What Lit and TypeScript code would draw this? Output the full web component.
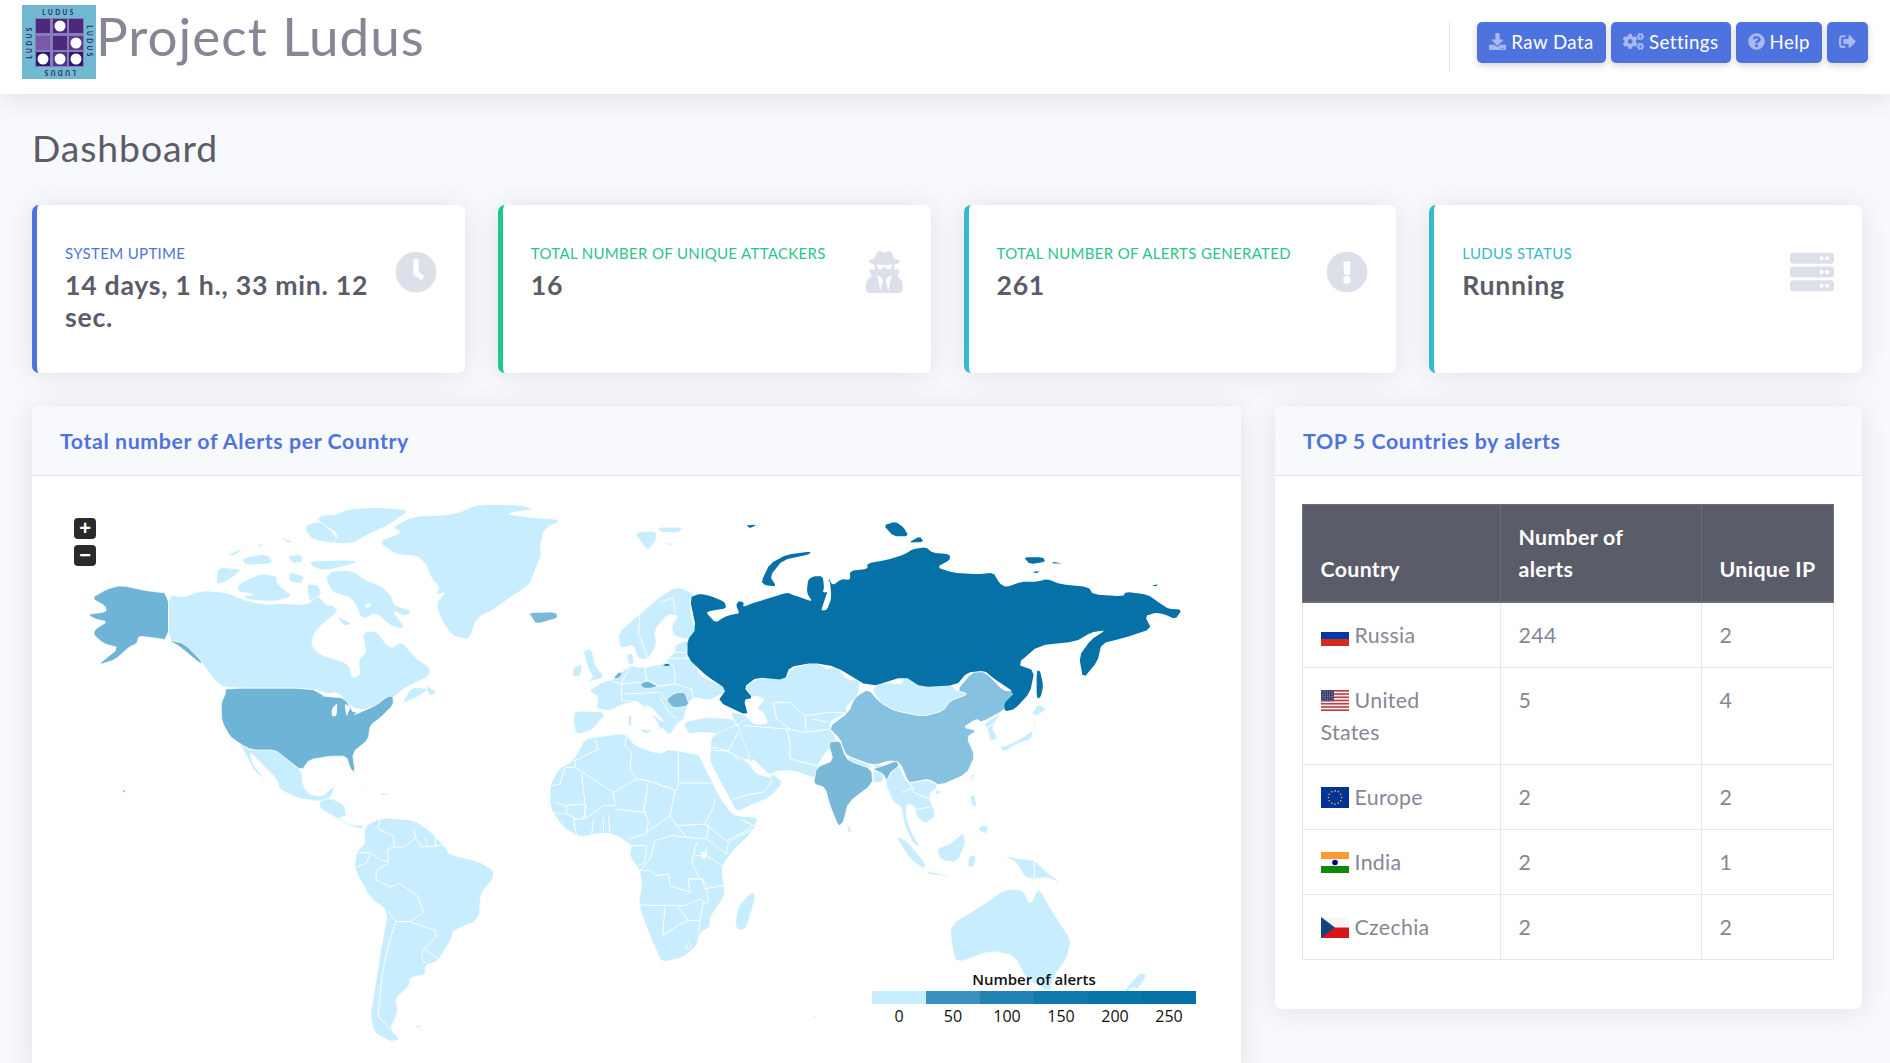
import {LitElement, html, css, svg} from 'lit';
import {customElement} from 'lit/decorators.js';

const FONT = css`Lato, "Noto Sans", sans-serif`;

// icon paths, [viewBox, d]
const ICONS: Record<string, [string, string]> = {
  download: ['0 0 512 512', 'M216 0h80c13.3 0 24 10.7 24 24v168h87.7c17.8 0 26.7 21.5 14.1 34.1L269.7 378.3c-7.5 7.5-19.8 7.5-27.3 0L90.1 226.1c-12.6-12.6-3.7-34.1 14.1-34.1H192V24c0-13.3 10.7-24 24-24zm296 376v112c0 13.3-10.7 24-24 24H24c-13.3 0-24-10.7-24-24V376c0-13.3 10.7-24 24-24h146.7l49 49c20.1 20.1 52.5 20.1 72.6 0l49-49H488c13.3 0 24 10.7 24 24zm-124 88c0-11-9-20-20-20s-20 9-20 20 9 20 20 20 20-9 20-20zm64 0c0-11-9-20-20-20s-20 9-20 20 9 20 20 20 20-9 20-20z'],
  cogs: ['0 0 640 512', 'M512.1 191l-8.2 14.3c-3 5.3-9.4 7.5-15.1 5.4-11.8-4.4-22.6-10.7-32.1-18.6-4.6-3.8-5.8-10.5-2.8-15.7l8.2-14.3c-6.9-8-12.3-17.3-15.9-27.4h-16.5c-6 0-11.2-4.3-12.2-10.3-2-12-2.1-24.6 0-37.1 1-6 6.2-10.4 12.2-10.4h16.5c3.6-10.1 9-19.4 15.9-27.4l-8.2-14.3c-3-5.2-1.9-11.9 2.8-15.7 9.5-7.9 20.4-14.2 32.1-18.6 5.7-2.1 12.1.1 15.1 5.4l8.2 14.3c10.5-1.9 21.2-1.9 31.7 0L552 6.3c3-5.3 9.4-7.5 15.1-5.4 11.8 4.4 22.6 10.7 32.1 18.6 4.6 3.8 5.8 10.5 2.8 15.7l-8.2 14.3c6.9 8 12.3 17.3 15.9 27.4h16.5c6 0 11.2 4.3 12.2 10.3 2 12 2.1 24.6 0 37.1-1 6-6.2 10.4-12.2 10.4h-16.5c-3.6 10.1-9 19.4-15.9 27.4l8.2 14.3c3 5.2 1.9 11.9-2.8 15.7-9.5 7.9-20.4 14.2-32.1 18.6-5.7 2.1-12.1-.1-15.1-5.4l-8.2-14.3c-10.4 1.9-21.2 1.9-31.7 0zm-10.5-58.8c38.5 29.6 82.4-14.3 52.8-52.8-38.5-29.7-82.4 14.3-52.8 52.8zM386.3 286.1l33.7 16.8c10.1 5.8 14.5 18.1 10.5 29.1-8.9 24.2-26.4 46.4-42.6 65.8-7.4 8.9-20.2 11.1-30.3 5.3l-29.1-16.8c-16 13.7-34.6 24.6-54.9 31.7v33.6c0 11.6-8.3 21.6-19.7 23.6-24.6 4.2-50.4 4.4-75.9 0-11.5-2-20-11.9-20-23.6V418c-20.3-7.2-38.9-18-54.9-31.7L74 403c-10 5.8-22.9 3.6-30.3-5.3-16.2-19.4-33.3-41.6-42.2-65.7-4-10.9.4-23.2 10.5-29.1l33.3-16.8c-3.9-20.9-3.9-42.4 0-63.4L12 205.8c-10.1-5.8-14.6-18.1-10.5-29 8.9-24.2 26-46.4 42.2-65.8 7.4-8.9 20.2-11.1 30.3-5.3l29.1 16.8c16-13.7 34.6-24.6 54.9-31.7V57.1c0-11.5 8.2-21.5 19.6-23.5 24.6-4.2 50.5-4.4 76-.1 11.5 2 20 11.9 20 23.6v33.6c20.3 7.2 38.9 18 54.9 31.7l29.1-16.8c10-5.8 22.9-3.6 30.3 5.3 16.2 19.4 33.2 41.6 42.1 65.8 4 10.9.1 23.2-10 29.1l-33.7 16.8c3.9 21 3.9 42.5 0 63.5zm-117.6 21.1c59.2-77-28.7-164.9-105.7-105.7-59.2 77 28.7 164.9 105.7 105.7zm243.4 182.7l-8.2 14.3c-3 5.3-9.4 7.5-15.1 5.4-11.8-4.4-22.6-10.7-32.1-18.6-4.6-3.8-5.8-10.5-2.8-15.7l8.2-14.3c-6.9-8-12.3-17.3-15.9-27.4h-16.5c-6 0-11.2-4.3-12.2-10.3-2-12-2.1-24.6 0-37.1 1-6 6.2-10.4 12.2-10.4h16.5c3.6-10.1 9-19.4 15.9-27.4l-8.2-14.3c-3-5.2-1.9-11.9 2.8-15.7 9.5-7.9 20.4-14.2 32.1-18.6 5.7-2.1 12.1.1 15.1 5.4l8.2 14.3c10.5-1.9 21.2-1.9 31.7 0l8.2-14.3c3-5.3 9.4-7.5 15.1-5.4 11.8 4.4 22.6 10.7 32.1 18.6 4.6 3.8 5.8 10.5 2.8 15.7l-8.2 14.3c6.9 8 12.3 17.3 15.9 27.4h16.5c6 0 11.2 4.3 12.2 10.3 2 12 2.1 24.6 0 37.1-1 6-6.2 10.4-12.2 10.4h-16.5c-3.6 10.1-9 19.4-15.9 27.4l8.2 14.3c3 5.2 1.9 11.9-2.8 15.7-9.5 7.9-20.4 14.2-32.1 18.6-5.7 2.1-12.1-.1-15.1-5.4l-8.2-14.3c-10.4 1.9-21.2 1.9-31.7 0zM501.6 431c38.5 29.6 82.4-14.3 52.8-52.8-38.5-29.6-82.4 14.3-52.8 52.8z'],
  help: ['0 0 512 512', 'M504 256c0 136.997-111.043 248-248 248S8 392.997 8 256C8 119.083 119.043 8 256 8s248 111.083 248 248zM262.655 90c-54.497 0-89.255 22.957-116.549 63.758-3.536 5.286-2.353 12.415 2.715 16.258l34.699 26.31c5.205 3.947 12.621 3.008 16.665-2.122 17.864-22.658 30.113-35.797 57.303-35.797 20.429 0 45.698 13.148 45.698 32.958 0 14.976-12.363 22.667-32.534 33.976C247.128 238.528 216 254.941 216 296v4c0 6.627 5.373 12 12 12h56c6.627 0 12-5.373 12-12v-1.333c0-28.462 83.186-29.647 83.186-106.667 0-58.002-60.165-102-116.531-102zM256 338c-25.365 0-46 20.635-46 46 0 25.364 20.635 46 46 46s46-20.636 46-46c0-25.365-20.635-46-46-46z'],
  signout: ['0 0 512 512', 'M497 273L329 441c-15 15-41 4.5-41-17v-96H152c-13.3 0-24-10.7-24-24v-96c0-13.3 10.7-24 24-24h136V88c0-21.4 25.9-32 41-17l168 168c9.3 9.4 9.3 24.6 0 34zM192 436v-40c0-6.6-5.4-12-12-12H96c-17.7 0-32-14.3-32-32V160c0-17.7 14.3-32 32-32h84c6.6 0 12-5.4 12-12V76c0-6.6-5.4-12-12-12H96c-53 0-96 43-96 96v192c0 53 43 96 96 96h84c6.6 0 12-5.4 12-12z'],
  clock: ['0 0 512 512', 'M256,8C119,8,8,119,8,256S119,504,256,504,504,393,504,256,393,8,256,8Zm92.49,313h0l-20,25a16,16,0,0,1-22.49,2.5h0l-67-49.72a40,40,0,0,1-15-31.23V112a16,16,0,0,1,16-16h32a16,16,0,0,1,16,16V256l58,42.5A16,16,0,0,1,348.49,321Z'],
  secret: ['0 0 448 512', 'M383.9 308.3l23.9-62.6c4-10.5-3.7-21.7-15-21.7h-58.5c11-18.9 17.8-40.6 17.8-64v-.3c39.2-7.8 64-19.1 64-31.7 0-13.3-27.3-25.1-70.1-33-9.2-32.8-27-65.8-40.6-82.8-9.5-11.9-25.9-15.6-39.5-8.8l-27.6 13.8c-9 4.5-19.6 4.5-28.6 0L182.1 3.4c-13.6-6.8-30-3.1-39.5 8.8-13.5 17-31.4 50-40.6 82.8-42.7 7.9-70 19.7-70 33 0 12.6 24.8 23.9 64 31.7v.3c0 23.4 6.8 45.1 17.8 64H56.3c-11.5 0-19.2 11.7-14.7 22.3l25.8 60.2C27.3 329.8 0 372.7 0 422.4v44.8C0 491.9 20.1 512 44.8 512h358.4c24.7 0 44.8-20.1 44.8-44.8v-44.8c0-48.4-25.8-90.4-64.1-114.1zM176 480l-41.6-192 49.6 32 24 40-32 120zm96 0l-32-120 24-40 49.6-32L272 480zm41.7-298.5c-3.9 11.9-7 24.6-16.5 33.4-10.1 9.3-48 22.4-64-25-2.8-8.4-15.4-8.4-18.3 0-17 50.2-56 32.4-64 25-9.5-8.8-12.7-21.5-16.5-33.4-.8-2.5-6.3-5.7-6.3-5.8v-10.8c28.3 3.6 61 5.8 96 5.8s67.7-2.1 96-5.8v10.8c-.1.1-5.6 3.2-6.4 5.8z'],
  alert: ['0 0 512 512', 'M504 256c0 136.997-111.043 248-248 248S8 392.997 8 256C8 119.083 119.043 8 256 8s248 111.083 248 248zm-248 50c-25.405 0-46 20.595-46 46s20.595 46 46 46 46-20.595 46-46-20.595-46-46-46zm-43.673-165.346l7.418 136c.347 6.364 5.609 11.346 11.982 11.346h48.546c6.373 0 11.635-4.982 11.982-11.346l7.418-136c.375-6.874-5.098-12.654-11.982-12.654h-63.383c-6.884 0-12.356 5.78-11.981 12.654z'],
  server: ['0 0 512 448', 'M480 128H32c-17.7 0-32-14.300-32-32V32C0 14.300 14.300 0 32 0h448c17.700 0 32 14.300 32 32v64c0 17.700-14.300 32-32 32zm-48-88a24 24 0 1 0 0 48 24 24 0 0 0 0-48zm-64 0a24 24 0 1 0 0 48 24 24 0 0 0 0-48zM480 288H32c-17.700 0-32-14.300-32-32v-64c0-17.700 14.300-32 32-32h448c17.700 0 32 14.300 32 32v64c0 17.700-14.300 32-32 32zm-48-88a24 24 0 1 0 0 48 24 24 0 0 0 0-48zm-64 0a24 24 0 1 0 0 48 24 24 0 0 0 0-48zM480 448H32c-17.700 0-32-14.300-32-32v-64c0-17.700 14.300-32 32-32h448c17.700 0 32 14.300 32 32v64c0 17.700-14.300 32-32 32zm-48-88a24 24 0 1 0 0 48 24 24 0 0 0 0-48zm-64 0a24 24 0 1 0 0 48 24 24 0 0 0 0-48z'],
};

const icon = (name: string, cls: string) => html`<svg class=${cls} viewBox=${ICONS[name][0]} aria-hidden="true"><path fill-rule="evenodd" d=${ICONS[name][1]}></path></svg>`;

const BUTTONS = [
  {icon: 'download', label: 'Raw Data'},
  {icon: 'cogs', label: 'Settings'},
  {icon: 'help', label: 'Help'},
  {icon: 'signout', label: ''},
];

const STATS = [
  {label: 'System uptime', value: '14 days, 1 h., 33 min. 12 sec.', icon: 'clock', tone: 'primary'},
  {label: 'Total number of unique attackers', value: '16', icon: 'secret', tone: 'success'},
  {label: 'Total number of alerts generated', value: '261', icon: 'alert', tone: 'success', edge: 'info'},
  {label: 'Ludus status', value: 'Running', icon: 'server', tone: 'info'},
];

const COUNTRIES = [
  {flag: 'ru', name: 'Russia', alerts: 244, ips: 2},
  {flag: 'us', name: 'United States', alerts: 5, ips: 4},
  {flag: 'eu', name: 'Europe', alerts: 2, ips: 2},
  {flag: 'in', name: 'India', alerts: 2, ips: 1},
  {flag: 'cz', name: 'Czechia', alerts: 2, ips: 2},
];

function euStars() {
  const stars = [];
  for (let i = 0; i < 12; i++) {
    const a = (i * Math.PI) / 6;
    stars.push(svg`<circle cx=${14 + 6.6 * Math.cos(a)} cy=${10.5 + 6.6 * Math.sin(a)} r="0.8" fill="#fc0"></circle>`);
  }
  return stars;
}

function usStripes() {
  const out = [];
  for (let i = 0; i < 7; i++) out.push(svg`<rect y=${i * 3.23} width="28" height="1.62" fill="#bd3d44"></rect>`);
  return out;
}

function usStars() {
  const out = [];
  for (let r = 0; r < 6; r++) {
    for (let c = 0; c < 7; c++) out.push(svg`<circle cx=${1 + c * 1.85} cy=${1 + r * 1.85} r="0.45" fill="#c8cbe0"></circle>`);
  }
  return out;
}

const FLAGS: Record<string, unknown> = {
  ru: svg`<rect width="28" height="7" fill="#fff"></rect><rect y="7" width="28" height="7" fill="#0039a6"></rect><rect y="14" width="28" height="7" fill="#d52b1e"></rect>`,
  us: svg`<rect width="28" height="21" fill="#f4f4f4"></rect>${usStripes()}<rect width="13" height="11.300" fill="#3b3b6d"></rect>${usStars()}`,
  eu: svg`<rect width="28" height="21" fill="#039"></rect>${euStars()}`,
  in: svg`<rect width="28" height="7" fill="#f93"></rect><rect y="7" width="28" height="7" fill="#fff"></rect><rect y="14" width="28" height="7" fill="#128807"></rect><circle cx="14" cy="10.500" r="2.800" fill="#008"></circle>`,
  cz: svg`<rect width="28" height="10.500" fill="#f6f6f6"></rect><rect y="10.500" width="28" height="10.500" fill="#d7141a"></rect><path d="M0 0l14 10.500L0 21z" fill="#11457e"></path>`,
};

// Map shapes are traced per crop, each group has its own scale onto the page
const Z_AMERICAS = 'translate(40 490) scale(.3954 .3635)';
const Z_EURASIA = 'translate(540 490) scale(.4337 .3635)';
const Z_EUROPE = 'translate(560 570) scale(.3333)';
const Z_AFRICA = 'translate(540 720) scale(.3333)';
const Z_ASIA = 'translate(800 660) scale(.3333)';

// cuts each corner a little so traced coastlines don't look like polygons
function soften(p: string) {
  const n = p.trim().split(/\s+/).map(Number);
  const pts: number[][] = [];
  for (let i = 0; i < n.length; i += 2) pts.push([n[i], n[i + 1]]);
  const out: string[] = [];
  pts.forEach((a, i) => {
    const b = pts[(i + 1) % pts.length];
    out.push(`${a[0] + (b[0] - a[0]) * 0.18} ${a[1] + (b[1] - a[1]) * 0.18}`);
    out.push(`${a[0] + (b[0] - a[0]) * 0.82} ${a[1] + (b[1] - a[1]) * 0.82}`);
  });
  return 'M' + out.join(' ') + 'Z';
}

const poly = (cls: string, pts: string[]) => pts.map(p => svg`<path class=${cls} d=${soften(p)}></path>`);
const lines = (pts: string[]) => pts.map(p => svg`<path class="border" d=${'M' + p}></path>`);

const americas = svg`<g transform=${Z_AMERICAS}>
  ${poly('c0', [
    '855 145 915 120 890 105 945 75 1025 72 1060 65 1100 45 1140 42 1210 44 1255 55 1175 68 1240 78 1322 85 1275 110 1265 160 1268 185 1255 215 1240 260 1215 280 1180 305 1150 330 1105 355 1085 415 1045 405 1020 370 1005 330 1005 310 1025 285 1000 290 1010 270 990 245 975 205 955 185 900 180',
    '325 290 360 298 395 285 420 280 470 285 530 310 575 318 600 315 680 318 700 290 725 320 740 320 755 335 700 385 685 425 705 455 780 480 790 520 810 510 805 470 825 450 815 395 850 390 885 440 915 420 950 465 985 490 985 515 925 545 895 572 850 600 805 610 750 570 685 548 468 548 440 525 410 478 360 425 325 415',
    '712 72 750 70 780 55 850 50 935 58 900 85 880 100 830 125 790 150 740 150 755 125 700 85',
    '722 245 740 225 790 225 830 255 860 265 890 295 895 320 940 335 925 350 890 335 920 375 915 385 885 375 850 340 815 360 790 300 740 285',
    '450 215 510 220 490 240 470 255 445 262',
    '500 262 560 232 600 240 600 262 640 295 590 310 530 305 510 295 545 290 500 282',
    '470 182 515 162 495 182',
    '510 190 575 178 590 205 520 210',
    '548 155 565 150 560 160',
    '625 185 660 180 665 200 640 205',
    '680 198 790 195 800 205 720 225 690 215',
    '672 100 710 88 750 130 745 150 690 140 672 115',
    '605 130 640 145 630 150',
    '628 228 670 240 660 260 632 255',
    '675 260 705 265 712 290 680 310',
    '750 350 790 370 770 378',
    '975 540 1005 560 985 570',
    '940 545 985 550 950 575 915 590',
    '505 700 535 718 595 718 620 740 662 775 665 815 680 840 715 845 740 820 745 820 735 850 705 860 650 850 605 825 600 800 560 755 530 722 540 760 570 800 545 780 515 720',
    '705 860 735 850 770 870 775 900 755 905 790 925 820 925 815 935 790 930 750 905 710 880',
    '770 800 840 830 810 815',
    '860 835 890 840 865 843',
    '820 930 860 905 945 910 985 940 1025 985 1035 1005 1110 1025 1148 1050 1145 1075 1115 1110 1110 1185 1045 1215 1040 1240 1005 1300 975 1310 975 1335 935 1345 935 1365 900 1400 905 1440 885 1485 912 1515 885 1520 845 1495 835 1450 845 1385 860 1280 880 1160 835 1125 795 1045 800 1000 822 975',
    '948 1478 968 1475 958 1484',
  ])}
  ${poly('us', [
    '325 287 270 280 205 265 170 275 130 300 165 322 168 338 120 345 140 358 170 365 140 385 135 400 160 425 200 437 145 485 190 470 225 435 245 425 250 405 275 408 325 415',
    '325 415 365 425 410 475 405 480 355 435',
    '468 548 685 548 720 570 770 575 795 620 850 595 880 570 893 570 893 595 860 630 835 650 830 690 790 725 797 780 785 770 775 735 735 735 680 745 662 775 620 740 595 718 535 718 505 700 480 680 460 640 458 590 470 560',
    '210 828 216 828 216 834 210 834',
  ])}
  ${poly('in', ['1235 340 1305 338 1310 355 1255 372 1245 355'])}
  ${poly('sea', [
    '738 605 752 588 750 625 738 625',
    '770 590 785 600 775 628',
    '708 570 750 558 770 575 730 572',
    '805 612 845 595 825 608 790 625',
    '822 318 838 312 835 325 825 328',
  ])}
  ${lines([
    '860 905 855 935 895 955 895 985 880 990 880 1030 850 1050 850 1075 885 1095 910 1085 955 1120 970 1165 935 1190 900 1190 880 1160',
    '935 1190 1000 1215 1000 1235 970 1265 965 1290 975 1305',
    '900 1190 880 1260 865 1340 855 1450 885 1485',
    '795 1000 835 1000 860 1020 880 1025',
    '895 985 920 985 950 960 945 935',
    '950 960 965 985 1020 980',
    '975 960 980 985',
    '1000 955 1000 985',
    '800 1040 825 1030 835 1005',
    '970 1265 1005 1290',
    '325 287 325 415',
  ])}
</g>`;

const eurasia = svg`<g transform=${Z_EURASIA}>
  ${poly('ru', [
    '345 298 370 288 395 295 425 310 430 328 395 335 383 340 405 368 425 352 445 345 460 342 452 320 458 308 470 312 468 325 495 312 530 300 570 285 585 292 605 300 628 310 615 285 618 250 630 240 652 240 655 270 652 285 668 282 665 245 675 265 695 248 715 250 715 225 755 220 755 205 800 195 840 180 860 165 890 160 905 175 945 180 945 195 915 215 950 230 1010 235 1045 230 1060 260 1075 270 1110 255 1145 255 1170 248 1200 262 1265 270 1275 290 1345 295 1350 283 1400 290 1430 315 1450 330 1480 332 1465 358 1440 345 1420 340 1395 350 1410 385 1345 410 1295 425 1285 475 1252 522 1243 460 1270 415 1305 388 1270 395 1235 420 1150 430 1100 482 1140 500 1130 560 1095 605 1072 612 1070 590 1095 560 1045 520 1025 500 985 505 960 540 880 545 840 515 760 545 680 488 630 478 575 490 565 525 500 518 470 545 490 575 470 580 480 625 410 585 430 550 385 515 340 465 340 415 360 385',
    '792 100 820 90 838 105 850 130 815 130',
    '850 148 875 130 885 145',
    '625 172 620 180 560 195 530 240 545 268 520 265 510 255 530 205 570 180',
    '1115 188 1160 188 1165 200 1130 207',
    '1180 200 1205 205 1185 205',
    '1410 265 1425 262 1420 268',
    '475 100 500 98 485 108',
    '1135 228 1152 226 1145 232',
  ])}
  ${poly('sea', ['648 335 662 332 672 300 668 245 662 285 655 310'])}
  ${poly('c0', [
    '218 120 265 115 270 135 250 170 235 150',
    '270 105 330 105 320 120 280 120',
    '290 148 308 150 298 156',
    '945 1200 1020 1145 1075 1100 1115 1105 1130 1145 1150 1095 1185 1170 1225 1240 1215 1290 1185 1340 1175 1385 1120 1345 1095 1285 1040 1270 960 1305 950 1260',
    '1385 1330 1400 1335 1380 1375 1365 1370 1340 1400 1360 1360',
    '630 1450 638 1450 634 1455',
  ])}
</g>`;

const europe = svg`<g transform=${Z_EUROPE}>
  ${poly('c0', [
    '405 75 350 52 290 90 240 135 175 190 180 238 220 228 235 270 265 270 290 225 282 185 325 135 355 140 335 170 340 200 385 212 410 180 395 150 390 85',
    '385 212 345 228 345 250 322 268 320 282 258 295 235 295 212 290 190 305 160 330 130 338 85 365 115 382 110 420 150 425 190 405 235 398 265 425 300 470 290 488 305 475 330 500 350 465 372 450 378 420 392 392 410 385 445 395 495 370 495 350 470 345 420 318 408 288 380 265',
    '200 255 218 255 222 285 205 285',
    '45 425 140 430 100 480 60 495 45 490 40 450',
    '70 245 95 240 105 290 135 325 80 340 100 325 85 300 75 265',
    '40 295 68 285 62 320 38 322',
    '370 460 435 445 525 450 530 480 490 495 425 490 385 495',
    '205 440 215 440 215 470 205 470',
    '240 480 280 485 255 495',
    '510 428 565 440 555 470 530 468',
    '555 350 600 325 680 330 690 300 765 280 800 300 830 293 860 330 900 335 895 378 860 410 860 432 805 460 830 510 810 540 800 545 770 595 780 625 755 625 700 605 650 605 630 620 580 570 570 580 540 520 530 470 565 445 580 465 625 465 610 430 590 420 615 390 585 380 555 395 570 375',
  ])}
  ${poly('sea', ['255 405 280 420 315 460 300 455 262 425'])}
  ${poly('us', ['160 328 175 310 188 310 180 325 170 330', '240 345 262 335 295 352 272 358 250 358'])}
  ${poly('in', ['318 392 345 372 375 370 388 410 340 418'])}
  ${poly('ru', ['308 290 330 290 330 285 318 285'])}
  ${lines([
    '255 295 258 330 295 352 345 345 345 320 340 290 320 282',
    '212 290 185 340 185 395 235 398',
    '185 345 150 335',
    '190 375 300 370 318 392',
    '345 345 395 360 400 390',
    '340 250 385 250',
    '322 268 385 268',
    '240 340 185 345',
    '290 90 240 135 235 190 265 270',
    '300 100 340 85 345 130',
    '640 400 690 400 735 440 810 430 860 432',
    '555 470 680 480 690 520 690 570 770 590',
    '680 480 735 490 810 480 830 510',
    '735 440 740 490',
    '640 400 650 450 690 480',
    '760 450 800 460',
    '300 385 330 435 350 450',
    '530 470 550 520',
  ])}
</g>`;

const africa = svg`<g transform=${Z_AFRICA}>
  ${poly('c0', [
    '135 60 165 55 255 42 285 80 360 105 385 90 480 108 480 115 540 235 580 290 655 295 640 335 570 405 545 445 550 490 555 530 510 595 510 625 480 640 470 680 430 715 365 730 350 695 325 640 295 555 305 500 300 455 268 410 275 380 240 355 200 340 115 355 65 320 30 265 30 200 55 150 100 125',
    '640 515 645 540 620 625 600 635 585 620 595 560',
    '515 50 595 15 600 40 630 115 620 125 545 90 520 85 510 100',
    '510 100 520 85 545 90 620 125 650 165 690 175 700 165 730 190 690 235 640 255 590 280 570 240 510 130',
  ])}
  ${poly('sea', ['484 400 498 398 498 418 484 420'])}
  ${lines([
    '105 145 220 220 290 180 325 185 410 215 415 195 415 100',
    '165 60 175 90 105 125 105 145',
    '260 50 255 80 275 100 270 150 290 180',
    '415 192 520 192',
    '125 165 135 255 75 260 45 250',
    '35 200 60 195 75 145 105 145',
    '220 220 225 260 190 260 135 300 135 255',
    '225 270 310 280 325 190',
    '310 265 325 310 318 345 265 360',
    '405 215 390 290 320 340',
    '390 290 410 320 495 315 520 265 525 240',
    '410 320 440 355 500 360 505 315',
    '440 355 395 350 345 365 330 420 300 455 335 455 345 470 385 465 390 500 450 520 445 480 490 480 490 500',
    '500 360 560 405 565 370 640 330',
    '495 315 560 365 610 340 640 320 600 300',
    '470 370 455 430 480 480 495 490 505 545 500 555 480 540 435 560 385 560 300 558',
    '500 380 500 410 545 440',
    '465 410 500 410',
    '550 500 490 510',
    '375 565 368 650 420 615 445 605 480 605 490 550',
    '415 565 445 605',
    '480 605 475 640',
    '140 260 130 300 100 300 110 350',
    '160 300 155 350',
    '190 295 190 340',
    '205 290 210 340',
    '80 260 80 285 110 300',
    '30 280 75 285',
    '270 380 320 380 315 430 295 440',
    '435 685 445 672 455 680 445 690 435 685',
    '520 95 565 95 600 125',
    '580 240 630 225 670 220 695 190 690 175',
    '545 90 565 95 595 40',
  ])}
</g>`;

const asia = svg`<g transform=${Z_ASIA}>
  ${poly('cn', ['205 90 240 130 285 155 370 172 430 155 450 125 505 105 470 95 515 40 555 38 610 95 645 95 630 125 610 155 545 190 530 180 490 205 530 215 500 235 525 290 500 345 420 380 385 360 340 370 325 370 300 310 270 305 220 320 140 290 130 270 120 240 85 205 145 160 165 115'])}
  ${poly('c0', [
    '215 90 250 70 305 75 310 55 370 72 450 75 470 95 505 105 450 125 430 155 370 172 285 155 240 130',
    '550 195 605 160 575 205 595 240 570 245 565 215',
    '705 180 705 210 660 240 620 260 600 262 610 280 650 255 695 240 700 210',
    '695 165 715 135 740 150 710 170',
    '140 292 215 320 215 330 145 310',
    '222 315 245 318 240 328 222 325',
    '218 335 250 345 248 370 220 372',
    '140 492 155 515 145 522',
    '295 315 320 370 340 370 385 362 415 380 385 410 408 470 375 495 348 470 345 445 322 432 318 470 335 520 360 565 340 555 312 495 305 445 280 430 255 370 272 345',
    '285 530 320 545 378 615 372 630 335 605',
    '380 635 460 655 420 650 385 645',
    '408 570 450 555 490 520 497 555 470 610 425 605',
    '505 590 530 590 520 625 505 625',
    '510 410 525 410 530 445 515 440',
    '540 500 565 500 560 525 535 515',
    '512 350 523 345 517 368',
    '405 395 420 392 418 405 408 405',
    '610 590 665 600 705 605 740 640 785 672 740 655 705 660 675 655 650 610',
  ])}
  ${poly('in', [
    '85 250 120 245 132 282 145 305 215 330 218 375 145 430 130 490 115 502 90 440 75 385 40 375 50 325 100 305',
    '218 330 250 320 290 305 298 320 272 340 260 365 250 345 222 332',
  ])}
  ${poly('ru', ['710 35 720 35 730 80 722 115 710 118'])}
  ${lines([
    '330 370 340 400 390 420',
    '305 400 345 385',
    '350 450 390 445',
    '703 605 703 660',
    '558 205 590 195',
  ])}
</g>`;

@customElement('world-map')
export class WorldMap extends LitElement {
  static styles = css`
    :host {
      display: block;
      position: relative;
      height: 600px;
    }

    svg {
      display: block;
      width: 100%;
      height: 100%;
    }

    path {
      stroke: #fff;
      stroke-width: 0.7;
      vector-effect: non-scaling-stroke;
      stroke-linejoin: round;
    }

    .c0 { fill: #c8edff; }
    .us { fill: #6db4d6; }
    .cn { fill: #86c1e0; }
    .in { fill: #7ab8d8; }
    .ru { fill: #0571a6; stroke: none; }
    .sea { fill: #fff; stroke: none; }
    .border { fill: none; stroke-width: 1; }

    .zoom {
      position: absolute;
      left: 42px;
      top: 42px;
      display: flex;
      flex-direction: column;
      gap: 6px;
    }

    .zoom span {
      width: 22px;
      height: 21px;
      border-radius: 4px;
      background: #2a2a2a;
      color: #fff;
      font: 700 20px/20px "Liberation Sans", sans-serif;
      text-align: center;
    }

    .legend {
      position: absolute;
      left: 840px;
      top: 495px;
      width: 324px;
      font: 16px/16px "Open Sans", sans-serif;
      color: #111;
      text-align: center;
    }

    .legend-title {
      margin-bottom: 4px;
      font-size: 15px;
      font-weight: 600;
    }

    .scale {
      display: grid;
      grid-template-columns: repeat(6, 54px);
    }

    .swatch {
      height: 13px;
    }

    .tick {
      margin-top: 4px;
    }
  `;

  render() {
    const steps = [
      ['0', '#c8edff'],
      ['50', '#3a91bf'],
      ['100', '#2183b3'],
      ['150', '#0e7aad'],
      ['200', '#0775aa'],
      ['250', '#0571a6'],
    ];
    return html`
      <svg viewBox="32 477 1209 600" aria-hidden="true">
        ${americas}${europe}${africa}${asia}${eurasia}
      </svg>
      <div class="zoom"><span>+</span><span>−</span></div>
      <div class="legend">
        <div class="legend-title">Number of alerts</div>
        <div class="scale">
          ${steps.map(([, c]) => html`<div class="swatch" style="background:${c}"></div>`)}
          ${steps.map(([t]) => html`<div class="tick">${t}</div>`)}
        </div>
      </div>
    `;
  }
}

@customElement('app-root')
export class AppRoot extends LitElement {
  static styles = css`
    :host {
      display: block;
      height: 100vh;
      overflow: hidden;
      background: #f8f9fc;
      font-family: ${FONT};
      font-size: 21.33px;
      line-height: 32px;
      color: #858796;
    }

    .topbar {
      display: flex;
      align-items: flex-start;
      height: 94px;
      box-sizing: border-box;
      padding: 5px 22px 0 22px;
      background: #fff;
      box-shadow: 0 2px 27px rgba(58, 59, 69, 0.15);
    }

    .logo {
      width: 74px;
      height: 74px;
      flex: none;
    }

    .brand {
      font-size: 53px;
      line-height: 62px;
      letter-spacing: 0.019em;
      color: #858796;
    }

    .actions {
      margin-left: auto;
      display: flex;
      gap: 5px;
      padding-top: 17px;
    }

    .divider {
      width: 1px;
      height: 50px;
      background: #e3e6f0;
      margin-right: 22px;
    }

    .btn {
      display: flex;
      align-items: center;
      gap: 5px;
      height: 41px;
      box-sizing: border-box;
      padding: 0 12px 2px;
      border-radius: 5px;
      background: #4e73df;
      color: #fff;
      font-size: 18.67px;
      letter-spacing: 0.024em;
      box-shadow: 0 3px 6px rgba(58, 59, 69, 0.2);
    }

    .btn-icon {
      height: 17px;
      fill: #a7b9ef;
    }

    .page {
      padding: 0 28px 0 32px;
    }

    h1 {
      margin: 0;
      padding-top: 31px;
      height: 80px;
      font-size: 37.300px;
      line-height: 45px;
      font-weight: 400;
      letter-spacing: 0.025em;
      color: #5a5c69;
    }

    .stats {
      display: grid;
      grid-template-columns: repeat(4, 1fr);
      gap: 33px;
    }

    .stat {
      display: flex;
      height: 168px;
      box-sizing: border-box;
      padding: 38px 28px 0 28px;
      background: #fff;
      border-left: 5px solid;
      border-radius: 7px;
      box-shadow: 0 2px 27px rgba(58, 59, 69, 0.12);
    }

    .stat.primary { border-color: #4e73df; }
    .stat.success { border-color: #1cc88a; }
    .stat.info { border-color: #36b9cc; }

    .stat-text {
      flex: 1;
      min-width: 0;
      padding-right: 20px;
    }

    .stat-label {
      font-size: 15px;
      line-height: 20px;
      letter-spacing: 0.022em;
      text-transform: uppercase;
    }

    .primary .stat-label { color: #4e73df; }
    .success .stat-label { color: #2cc48a; }
    .info .stat-label { color: #36b9cc; }
    .edge .stat-label { color: #2cc48a; }

    .stat-value {
      font-size: 26.670px;
      font-weight: 700;
      line-height: 32px;
      letter-spacing: 0.027em;
      color: #5a5c69;
      margin-top: 6px;
    }

    .stat-icon {
      flex: none;
      height: 42px;
      max-width: 44px;
      margin-top: 8px;
      fill: #dddfeb;
    }

    .panels {
      display: grid;
      grid-template-columns: 1209px 587px;
      gap: 34px;
      margin-top: 33px;
      align-items: start;
    }

    .panel {
      background: #fff;
      border-radius: 7px;
      box-shadow: 0 2px 27px rgba(58, 59, 69, 0.12);
    }

    .panel-head {
      height: 70px;
      box-sizing: border-box;
      padding: 19px 28px;
      background: #f8f9fc;
      border-bottom: 1px solid #e3e6f0;
      border-radius: 7px 7px 0 0;
      color: #4e73df;
      font-weight: 700;
      letter-spacing: 0.028em;
    }

    .panel-body {
      padding: 28px 29px 49px 27px;
    }

    table {
      width: 531px;
      table-layout: fixed;
      border-collapse: collapse;
      letter-spacing: 0.015em;
    }

    th, td {
      padding: 16px 17.500px;
      border: 1px solid #e3e6f0;
      text-align: left;
      vertical-align: top;
    }

    th {
      vertical-align: bottom;
      background: #5a5c69;
      border-color: #6c6e7e;
      border-bottom-width: 2px;
      color: #fff;
      font-weight: 700;
    }

    th:nth-child(2) {
      padding-right: 40px;
    }

    th:last-child {
      white-space: nowrap;
    }

    td:first-child {
      padding-right: 30px;
    }

    .flag {
      display: inline-block;
      width: 28px;
      height: 21px;
      margin-right: 6px;
      vertical-align: -3px;
    }
  `;

  private _logo() {
    return html`<svg class="logo" viewBox="0 0 74 74" aria-hidden="true">
      <style>text { font: 700 6.500px Lato, sans-serif; letter-spacing: 2.400px; fill: #2c2466; text-anchor: middle; }</style>
      <rect width="74" height="74" fill="#70b9d1"></rect>
      <rect x="13" y="13" width="49" height="49" fill="#8a7cba"></rect>
      <rect x="14" y="14" width="14" height="14" fill="#4b2a7b"></rect>
      <rect x="31" y="14" width="14" height="14" fill="#4b2a7b"></rect>
      <rect x="47" y="14" width="14" height="14" fill="#4b2a7b"></rect>
      <rect x="14" y="31" width="14" height="14" fill="#7a5aa8"></rect>
      <rect x="31" y="31" width="14" height="14" fill="#4b2a7b"></rect>
      <rect x="47" y="31" width="14" height="14" fill="#5b3b8b"></rect>
      <rect x="14" y="47" width="14" height="14" fill="#2c1b6b"></rect>
      <rect x="31" y="47" width="14" height="14" fill="#4b3a8b"></rect>
      <rect x="47" y="47" width="14" height="14" fill="#2c1b6b"></rect>
      <circle cx="38" cy="21" r="5.500" fill="#fff"></circle>
      <circle cx="54" cy="38" r="5.500" fill="#fff"></circle>
      <circle cx="21" cy="54" r="5.500" fill="#fff"></circle>
      <circle cx="38" cy="54" r="5.500" fill="#fff"></circle>
      <circle cx="54" cy="54" r="5.500" fill="#fff"></circle>
      <text x="37" y="10">LUDUS</text>
      <text transform="translate(37 65) rotate(180)">LUDUS</text>
      <text transform="translate(10 37) rotate(-90)">LUDUS</text>
      <text transform="translate(65 37) rotate(90)">LUDUS</text>
    </svg>`;
  }

  render() {
    return html`
      <header class="topbar">
        ${this._logo()}
        <div class="brand">Project Ludus</div>
        <div class="actions">
          <div class="divider"></div>
          ${BUTTONS.map(b => html`<div class="btn">${icon(b.icon, 'btn-icon')}${b.label}</div>`)}
        </div>
      </header>
      <main class="page">
        <h1>Dashboard</h1>
        <section class="stats">
          ${STATS.map(s => html`
            <div class="stat ${s.edge ?? s.tone} ${s.edge ? 'edge' : ''}">
              <div class="stat-text">
                <div class="stat-label">${s.label}</div>
                <div class="stat-value">${s.value}</div>
              </div>
              ${icon(s.icon, 'stat-icon')}
            </div>
          `)}
        </section>
        <section class="panels">
          <div class="panel">
            <div class="panel-head">Total number of Alerts per Country</div>
            <world-map></world-map>
          </div>
          <div class="panel">
            <div class="panel-head">TOP 5 Countries by alerts</div>
            <div class="panel-body">
              <table>
                <colgroup><col style="width:198px"><col style="width:201px"><col style="width:132px"></colgroup>
                <thead><tr><th>Country</th><th>Number of alerts</th><th>Unique IP</th></tr></thead>
                <tbody>
                  ${COUNTRIES.map(c => html`<tr>
                    <td><svg class="flag" viewBox="0 0 28 21" aria-hidden="true">${FLAGS[c.flag]}</svg>${c.name}</td>
                    <td>${c.alerts}</td>
                    <td>${c.ips}</td>
                  </tr>`)}
                </tbody>
              </table>
            </div>
          </div>
        </section>
      </main>
    `;
  }
}
